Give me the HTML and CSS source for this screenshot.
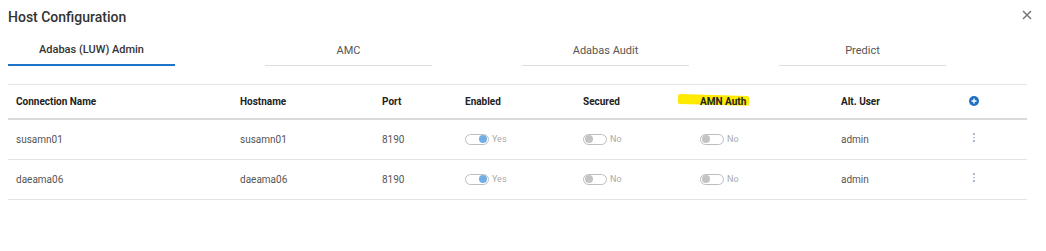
FILE: index.html
```html
<!DOCTYPE html>
<html>
<head>
<meta charset="utf-8">
<link rel="stylesheet" href="styles.css">
</head>
<body>
<div class="dialog">
  <div class="head">
    <h1 class="title">Host Configuration</h1>
    <span class="close">
      <svg width="10" height="10" viewBox="0 0 10 10"><path d="M1 1 L9 9 M9 1 L1 9" stroke="#777" stroke-width="1.5" fill="none"/></svg>
    </span>
  </div>
  <div class="tabs">
    <div class="tab active">Adabas (LUW) Admin</div>
    <div class="tab">AMC</div>
    <div class="tab">Adabas Audit</div>
    <div class="tab">Predict</div>
  </div>
  <table class="grid">
    <colgroup>
      <col class="c1"><col class="c2"><col class="c3"><col class="c4"><col class="c5"><col class="c6"><col class="c7"><col class="c8">
    </colgroup>
    <thead>
      <tr>
        <th>Connection Name</th>
        <th>Hostname</th>
        <th>Port</th>
        <th>Enabled</th>
        <th>Secured</th>
        <th><span class="hl">AMN Auth</span></th>
        <th>Alt. User</th>
        <th><span class="add"><svg width="10" height="10" viewBox="0 0 10 10"><circle cx="5" cy="5" r="5" fill="#1f6fc5"/><path d="M5 2.5 V7.5 M2.5 5 H7.5" stroke="#fff" stroke-width="1.4"/></svg></span></th>
      </tr>
    </thead>
    <tbody>
      <tr>
        <td>susamn01</td>
        <td>susamn01</td>
        <td>8190</td>
        <td><span class="tg on"><span class="track"><span class="knob"></span></span>Yes</span></td>
        <td><span class="tg"><span class="track"><span class="knob"></span></span>No</span></td>
        <td><span class="tg"><span class="track"><span class="knob"></span></span>No</span></td>
        <td>admin</td>
        <td><span class="kebab"><i></i><i></i><i></i></span></td>
      </tr>
      <tr>
        <td>daeama06</td>
        <td>daeama06</td>
        <td>8190</td>
        <td><span class="tg on"><span class="track"><span class="knob"></span></span>Yes</span></td>
        <td><span class="tg"><span class="track"><span class="knob"></span></span>No</span></td>
        <td><span class="tg"><span class="track"><span class="knob"></span></span>No</span></td>
        <td>admin</td>
        <td><span class="kebab"><i></i><i></i><i></i></span></td>
      </tr>
    </tbody>
  </table>
</div>
</body>
</html>
```
FILE: styles.css
```css
html, body {
  margin: 0;
  padding: 0;
  background: #fff;
  font-family: Roboto, "Liberation Sans", Arial, sans-serif;
}
.dialog {
  padding: 0 19px 0 8px;
}
.head {
  display: flex;
  align-items: center;
  justify-content: space-between;
  height: 34px;
}
.title {
  margin: 0;
  font-size: 14px;
  font-weight: 500;
  color: #333;
}
.close {
  display: flex;
  width: 10px;
  height: 10px;
  margin-right: -5px;
  margin-top: -4px;
}
.tabs {
  display: flex;
  gap: 90px;
  height: 32px;
}
.tab {
  width: 167px;
  box-sizing: border-box;
  border-bottom: 1px solid #dedede;
  text-align: center;
  font-size: 11px;
  font-weight: 400;
  color: #555;
  line-height: 33px;
}
.tab.active {
  border-bottom: 2px solid #1f73c9;
  color: #333;
  font-weight: 500;
  line-height: 32px;
}
.grid {
  margin-top: 18px;
  width: 1019px;
  border-collapse: collapse;
  table-layout: fixed;
}
.c1 { width: 224px; }
.c2 { width: 142px; }
.c3 { width: 83px; }
.c4 { width: 118px; }
.c5 { width: 117px; }
.c6 { width: 141px; }
.c7 { width: 128px; }
.c8 { width: 66px; }
.grid th {
  text-align: left;
  font-size: 10px;
  font-weight: 700;
  color: #222;
  height: 33px;
  padding: 0 8px;
  border-top: 1px solid #e6e6e6;
  border-bottom: 2px solid #dadada;
}
.grid td {
  font-size: 10px;
  color: #555;
  height: 39px;
  padding: 0 8px;
  border-bottom: 1px solid #e4e4e4;
}
.hl {
  position: relative;
  display: inline-block;
}
.hl::before {
  content: "";
  position: absolute;
  left: -22px;
  right: -3px;
  top: -1px;
  height: 10px;
  background: #ffea00;
  transform: rotate(1.5deg);
  z-index: -1;
  border-radius: 2px;
}
.grid th:nth-child(6) { position: relative; z-index: 0; }
.add {
  display: inline-flex;
  margin-left: 0;
}
.tg {
  display: inline-flex;
  align-items: center;
  gap: 3px;
  font-size: 9px;
  color: #aaa;
  margin-top: -6px;
}
.track {
  display: inline-flex;
  align-items: center;
  box-sizing: border-box;
  width: 24px;
  height: 11px;
  border: 1px solid #bdbdbd;
  border-radius: 6px;
  padding: 0 1px;
}
.knob {
  width: 8px;
  height: 8px;
  border-radius: 50%;
  background: #c4c4c4;
}
.tg.on .track {
  justify-content: flex-end;
}
.tg.on .knob {
  background: #72aee3;
}
.kebab {
  display: inline-flex;
  flex-direction: column;
  gap: 2px;
  margin-left: 4px;
  margin-top: -6px;
  vertical-align: middle;
}
.kebab i {
  display: block;
  width: 1.5px;
  height: 1.5px;
  background: #a9bccf;
}
```
